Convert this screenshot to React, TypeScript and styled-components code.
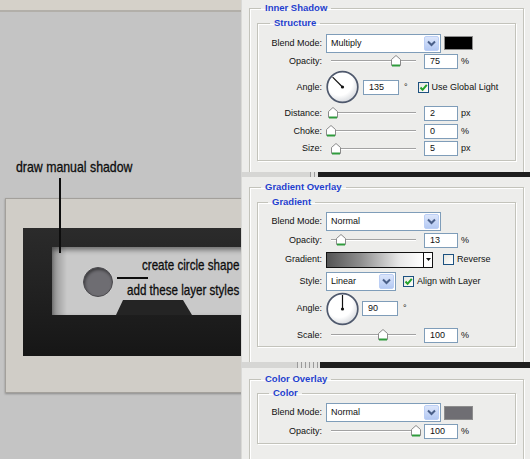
import React, { useId } from "react"
import styled, { createGlobalStyle } from "styled-components"

const GlobalStyle = createGlobalStyle`
  *, *::before, *::after { box-sizing: border-box; }
  html, body { margin: 0; padding: 0; background: #c4c4c4; }
  #root { width: 530px; height: 459px; }
`

const Screen = styled.div`
  display: flex;
  width: 530px;
  height: 459px;
  overflow: hidden;
`

/* ---------- design canvas (left) ---------- */

const Canvas = styled.div`
  position: relative;
  flex: 0 0 241px;
  overflow: hidden;
  background: #c4c4c4;
`

const Pasteboard = styled.div`
  height: 12px;
  background: #d5d1c9;
  border-bottom: 2px solid #b2afa9;
`

const Artboard = styled.div`
  width: 262px;
  height: 195px;
  margin: 186px 0 0 5px;
  padding: 29px 0 0 17px;
  background: #d0cdc7;
  border: 1px solid #a3a09b;
  box-shadow: 0 1px 2px rgba(0, 0, 0, 0.3);
`

const Bezel = styled.div`
  width: 245px;
  height: 128px;
  padding: 19px 0 0 29px;
  background: linear-gradient(#2b2b2b, #222 45%, #161616);
`

const Face = styled.div`
  position: relative;
  height: 68px;
  padding: 20px 0 0 31px;
  background: linear-gradient(to right, rgba(0, 0, 0, 0.3), rgba(0, 0, 0, 0) 15px), #c9c9c9;
  box-shadow: inset 0 3px 5px rgba(0, 0, 0, 0.45);
`

const Knob = styled.div`
  width: 30px;
  height: 30px;
  border-radius: 50%;
  background: #6e6d72;
  border: 1px solid #4a494d;
  box-shadow: inset 1px 2px 3px rgba(0, 0, 0, 0.45), 0 0 1px rgba(255, 255, 255, 0.4);
`

const Notch = styled.div`
  position: absolute;
  left: 64px;
  bottom: 0;
  width: 76px;
  height: 15px;
  background: #242424;
  clip-path: polygon(7px 0, 67px 0, 100% 100%, 0 100%);
`

// callouts lie over the artwork; narrow face faked with a horizontal squeeze
const Note = styled.span<{ $x: number; $y: number; $squeeze: number }>`
  position: absolute;
  left: ${p => p.$x}px;
  top: ${p => p.$y}px;
  font: 14.5px/15px "Liberation Sans", Arial, sans-serif;
  color: #0d0d0d;
  -webkit-text-stroke: 0.3px #0d0d0d;
  white-space: nowrap;
  transform: scaleX(${p => p.$squeeze});
  transform-origin: 0 50%;
`

const Leader = styled.span<{ $x: number; $y: number; $w: number; $h: number }>`
  position: absolute;
  left: ${p => p.$x}px;
  top: ${p => p.$y}px;
  width: ${p => p.$w}px;
  height: ${p => p.$h}px;
  background: #0d0d0d;
`

/* ---------- layer style dialogs (right) ---------- */

const Dialogs = styled.div`
  flex: 1;
  display: flex;
  flex-direction: column;
`

const Panel = styled.section<{ $h: number }>`
  height: ${p => p.$h}px;
  overflow: hidden;
  padding-left: 7px;
  background: #ededeb;
  border-left: 1px solid #d9d9d6;
  font: 9px/11px "Liberation Sans", Arial, sans-serif;
  color: #111;
`

const Seam = styled.div<{ $h: number }>`
  display: flex;
  height: ${p => p.$h}px;
`

const SeamLight = styled.span<{ $w: number }>`
  width: ${p => p.$w}px;
  background: #d6d6d4;
`

const SeamGrip = styled.span<{ $w: number }>`
  width: ${p => p.$w}px;
  background: repeating-linear-gradient(to right, #9a9a9a 0 1px, #e2e2e0 1px 4px);
`

const SeamDark = styled.span`
  flex: 1;
  background: #1e1e1e;
`

const Group = styled.fieldset<{ $top: number }>`
  width: 275px;
  min-width: 0;
  min-height: 400px;
  margin: ${p => p.$top}px 0 0;
  padding: 0 6px 0 7px;
  border: 1px solid #c3c3bb;
  box-shadow: inset 1px 1px 0 #fff, 1px 1px 0 #fff;
`

const SubGroup = styled.fieldset<{ $top: number; $padTop: number; $padBottom: number }>`
  width: 259px;
  min-width: 0;
  margin: ${p => p.$top}px 0 0;
  padding: ${p => p.$padTop}px 0 ${p => p.$padBottom}px;
  border: 1px solid #c3c3bb;
  box-shadow: inset 1px 1px 0 #fff, 1px 1px 0 #fff;
`

const Legend = styled.legend<{ $indent: number }>`
  margin-left: ${p => p.$indent}px;
  padding: 0 4px;
  font: bold 9.5px/12px "Liberation Sans", Arial, sans-serif;
  color: #1f3fce;
`

const Row = styled.div<{ $h: number }>`
  display: flex;
  align-items: center;
  height: ${p => p.$h}px;
`

const Label = styled.span`
  width: 64px;
  margin-right: 4px;
  text-align: right;
`

const SelectBox = styled.span<{ $w: number }>`
  display: flex;
  align-items: center;
  width: ${p => p.$w}px;
  height: 19px;
  padding: 0 1px 0 4px;
  background: #fff;
  border: 1px solid #7f9db9;
`

const SelectText = styled.span`
  flex: 1;
`

const SelectButton = styled.span`
  display: flex;
  align-items: center;
  justify-content: center;
  width: 15px;
  height: 15px;
  border: 1px solid #bccff5;
  border-radius: 2px;
  background: linear-gradient(#dce6fb, #b4c9f3);
`

const Field = styled.span<{ $w?: number; $gap?: number }>`
  width: ${p => p.$w ?? 34}px;
  height: 15px;
  margin-left: ${p => p.$gap ?? 4}px;
  padding-left: 5px;
  line-height: 13px;
  background: #fff;
  border: 1px solid #7f9db9;
`

const Unit = styled.span<{ $gap?: number }>`
  margin-left: ${p => p.$gap ?? 3}px;
`

const Swatch = styled.span<{ $color: string }>`
  width: 29px;
  height: 14px;
  margin-left: 3px;
  background: ${p => p.$color};
  border: 1px solid #8d8d8d;
`

const Track = styled.span`
  position: relative;
  display: block;
  width: 94px;
  height: 14px;

  &::before {
    content: "";
    position: absolute;
    left: 5px;
    right: 4px;
    top: 6px;
    height: 2px;
    border-top: 1px solid #a2a2a2;
    border-bottom: 1px solid #fff;
  }
`

const Thumb = styled.svg`
  position: absolute;
  top: 1px;
`

const Box = styled.span<{ $gap?: number }>`
  display: inline-flex;
  align-items: center;
  justify-content: center;
  width: 11px;
  height: 11px;
  margin-left: ${p => p.$gap ?? 10}px;
  margin-right: 3px;
  background: linear-gradient(135deg, #e6e6e0, #fff);
  border: 1px solid #1c5180;
`

const GradientBar = styled.span`
  display: flex;
  width: 107px;
  height: 16px;
  border: 1px solid #111;
`

const GradientFill = styled.span`
  flex: 1;
  background: linear-gradient(to right, #545454, #8e8e8e 35%, #e8e8e8 75%, #fff);
`

const GradientArrow = styled.span`
  display: flex;
  align-items: center;
  justify-content: center;
  width: 9px;
  background: #fff;
  border-left: 1px solid #111;
`

const Chevron = () => (
  <svg width="9" height="7" viewBox="0 0 9 7">
    <path d="M1 1.5 L4.5 5 L8 1.5" fill="none" stroke="#4a5f88" strokeWidth="2" />
  </svg>
)

const Select = ({ value, width }: { value: string; width: number }) => (
  <SelectBox $w={width}>
    <SelectText>{value}</SelectText>
    <SelectButton>
      <Chevron />
    </SelectButton>
  </SelectBox>
)

const Slider = ({ pos }: { pos: number }) => (
  <Track>
    <Thumb width="10" height="12" viewBox="0 0 10 12" style={{ left: pos * 85 }}>
      <path d="M0.5 4.5 L5 0.5 L9.5 4.5 V10.5 H0.5 Z" fill="#fff" stroke="#8a8a8a" />
      <path d="M1 10.5 H9" stroke="#2f9b3c" strokeWidth="2" />
    </Thumb>
  </Track>
)

const Dial = ({ angle }: { angle: number }) => {
  const id = useId()
  const rad = (angle * Math.PI) / 180
  return (
    <svg width="33" height="34" viewBox="0 0 33 34">
      <defs>
        <radialGradient id={id} cx="0.4" cy="0.35" r="0.7">
          <stop offset="0.6" stopColor="#fff" />
          <stop offset="1" stopColor="#d3d6db" />
        </radialGradient>
      </defs>
      <circle cx="16.5" cy="17" r="15.3" fill={`url(#${id})`} stroke="#4f596d" strokeWidth="1.7" />
      <line x1="16.5" y1="17" x2={16.5 + 14 * Math.cos(rad)} y2={17 - 14 * Math.sin(rad)} stroke="#111" strokeWidth="1.2" />
      <circle cx="16.5" cy="17" r="1.6" fill="#111" />
    </svg>
  )
}

const Check = ({ on, gap }: { on?: boolean; gap?: number }) => (
  <Box $gap={gap}>
    {on && (
      <svg width="9" height="9" viewBox="0 0 9 9">
        <path d="M1.5 4.5 L3.6 6.8 L7.8 1.8" fill="none" stroke="#22a12a" strokeWidth="2" />
      </svg>
    )}
  </Box>
)

export default function App() {
  return (
    <Screen>
      <GlobalStyle />

      <Canvas>
        <Pasteboard />
        <Artboard>
          <Bezel>
            <Face>
              <Knob />
              <Notch />
            </Face>
          </Bezel>
        </Artboard>

        <Note $x={16} $y={160} $squeeze={0.85}>draw manual shadow</Note>
        <Leader $x={59} $y={178} $w={2} $h={75} />
        <Note $x={142} $y={258} $squeeze={0.8}>create circle shape</Note>
        <Leader $x={117} $y={277} $w={31} $h={2} />
        <Note $x={127} $y={283} $squeeze={0.8}>add these layer styles</Note>
      </Canvas>

      <Dialogs>
        <Panel $h={172}>
          <Group $top={2}>
            <Legend $indent={4}>Inner Shadow</Legend>
            <SubGroup $top={3} $padTop={5} $padBottom={3}>
              <Legend $indent={12}>Structure</Legend>
              <Row $h={18}>
                <Label>Blend Mode:</Label>
                <Select value="Multiply" width={115} />
                <Swatch $color="#000" />
              </Row>
              <Row $h={18}>
                <Label>Opacity:</Label>
                <Slider pos={0.76} />
                <Field>75</Field>
                <Unit>%</Unit>
              </Row>
              <Row $h={34}>
                <Label>Angle:</Label>
                <Dial angle={135} />
                <Field $w={36} $gap={4}>135</Field>
                <Unit $gap={5}>°</Unit>
                <Check on gap={10} />
                Use Global Light
              </Row>
              <Row $h={18}>
                <Label>Distance:</Label>
                <Slider pos={0.025} />
                <Field>2</Field>
                <Unit>px</Unit>
              </Row>
              <Row $h={18}>
                <Label>Choke:</Label>
                <Slider pos={0} />
                <Field>0</Field>
                <Unit>%</Unit>
              </Row>
              <Row $h={17}>
                <Label>Size:</Label>
                <Slider pos={0.06} />
                <Field>5</Field>
                <Unit>px</Unit>
              </Row>
            </SubGroup>
          </Group>
        </Panel>

        <Seam $h={5}>
          <SeamLight $w={69} />
          <SeamGrip $w={8} />
          <SeamDark />
        </Seam>

        <Panel $h={185}>
          <Group $top={4}>
            <Legend $indent={4}>Gradient Overlay</Legend>
            <SubGroup $top={3} $padTop={4} $padBottom={1}>
              <Legend $indent={10}>Gradient</Legend>
              <Row $h={19}>
                <Label>Blend Mode:</Label>
                <Select value="Normal" width={115} />
              </Row>
              <Row $h={18}>
                <Label>Opacity:</Label>
                <Slider pos={0.12} />
                <Field>13</Field>
                <Unit>%</Unit>
              </Row>
              <Row $h={21}>
                <Label>Gradient:</Label>
                <GradientBar>
                  <GradientFill />
                  <GradientArrow>
                    <svg width="5" height="3" viewBox="0 0 5 3">
                      <path d="M0 0 H5 L2.5 3 Z" fill="#111" />
                    </svg>
                  </GradientArrow>
                </GradientBar>
                <Check gap={10} />
                Reverse
              </Row>
              <Row $h={22}>
                <Label>Style:</Label>
                <Select value="Linear" width={70} />
                <Check on gap={7} />
                Align with Layer
              </Row>
              <Row $h={33}>
                <Label>Angle:</Label>
                <Dial angle={90} />
                <Field $w={36} $gap={3}>90</Field>
                <Unit $gap={5}>°</Unit>
              </Row>
              <Row $h={20}>
                <Label>Scale:</Label>
                <Slider pos={0.61} />
                <Field>100</Field>
                <Unit>%</Unit>
              </Row>
            </SubGroup>
          </Group>
        </Panel>

        <Seam $h={6}>
          <SeamLight $w={56} />
          <SeamGrip $w={23} />
          <SeamDark />
        </Seam>

        <Panel $h={91}>
          <Group $top={5}>
            <Legend $indent={4}>Color Overlay</Legend>
            <SubGroup $top={2} $padTop={4} $padBottom={3}>
              <Legend $indent={11}>Color</Legend>
              <Row $h={19}>
                <Label>Blend Mode:</Label>
                <Select value="Normal" width={115} />
                <Swatch $color="#6f6e73" />
              </Row>
              <Row $h={18}>
                <Label>Opacity:</Label>
                <Slider pos={1} />
                <Field>100</Field>
                <Unit>%</Unit>
              </Row>
            </SubGroup>
          </Group>
        </Panel>
      </Dialogs>
    </Screen>
  )
}
